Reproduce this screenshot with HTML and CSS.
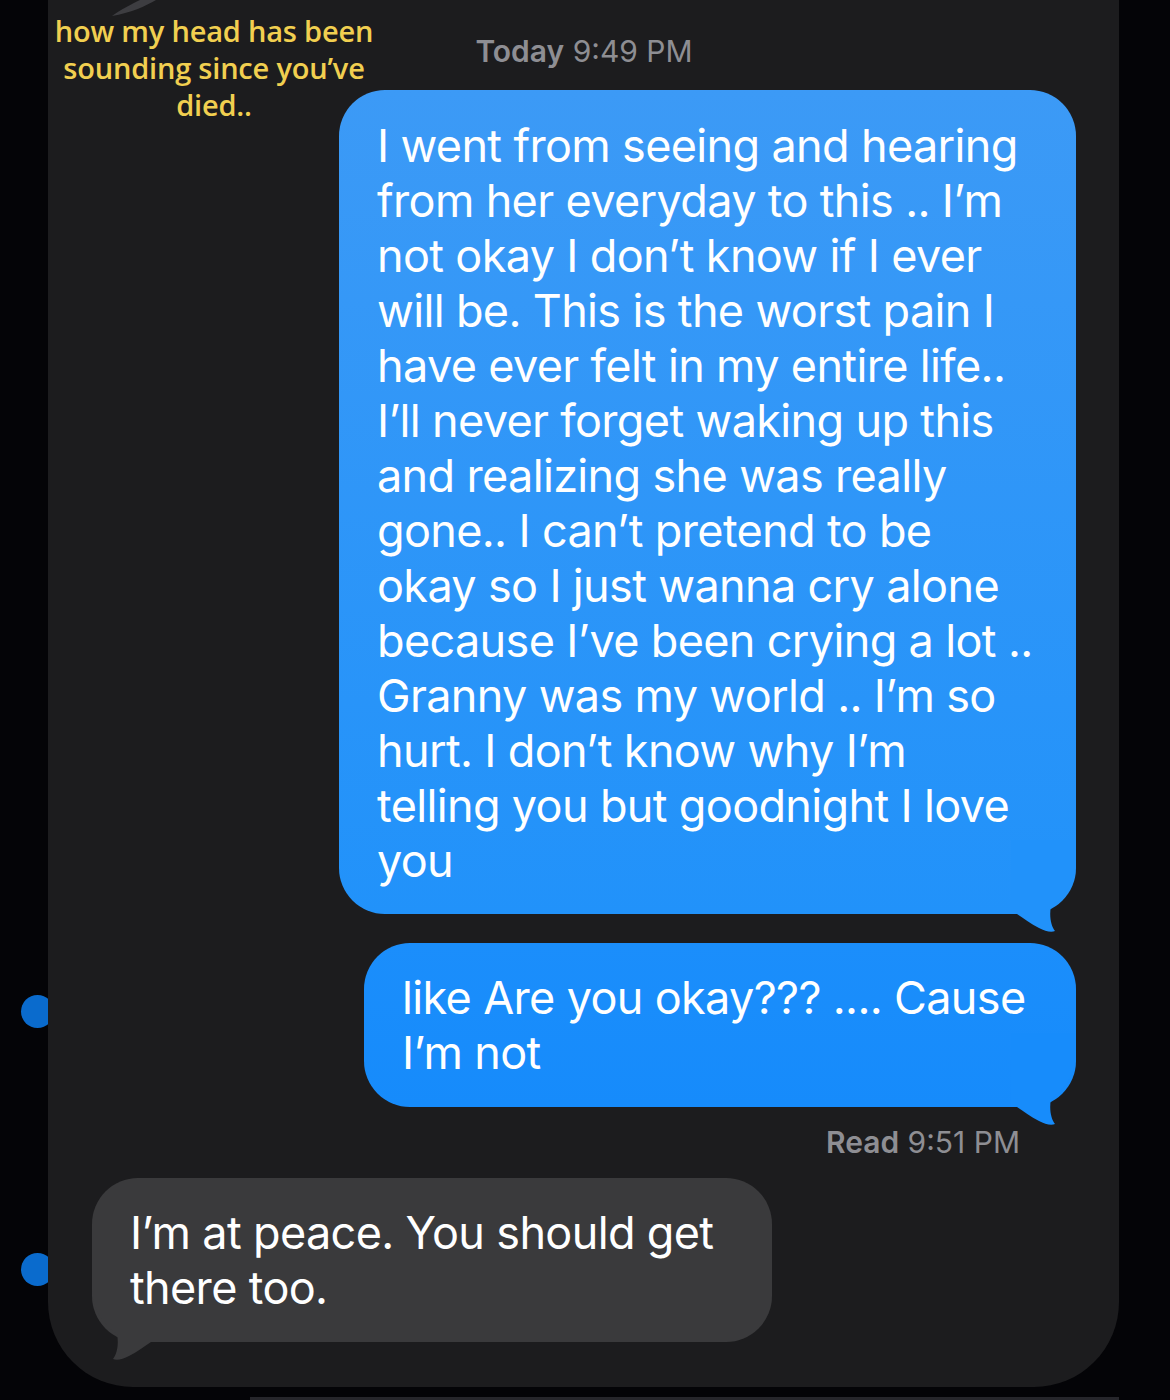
FILE: index.html
```html
<!DOCTYPE html>
<html lang="en">
<head>
    <meta charset="UTF-8">
    <meta name="viewport" content="width=device-width, initial-scale=1.0">
    <title>Messages</title>
    <link rel="stylesheet" href="styles.css">
</head>
<body>
    <div class="device">
        <span class="dot dot-top"></span>
        <span class="dot dot-bottom"></span>

        <div class="screen">
            <!-- bit of the previous bubble poking in at the top -->
            <svg class="prev-tail" width="50" height="20" viewBox="0 0 50 20">
                <path d="M2,16 C10,10 22,4 30,0 H46 C36,6 20,13 2,16 Z" fill="#3d3d41"/>
            </svg>

            <p class="caption">how my head has been<br>sounding since you’ve<br>died..</p>

            <div class="thread">
                <div class="stamp"><b>Today</b> 9:49 PM</div>

                <div class="bubble sent long">
                    I went from seeing and hearing<br>
                    from her everyday to this .. I’m<br>
                    not okay I don’t know if I ever<br>
                    will be. This is the worst pain I<br>
                    have ever felt in my entire life..<br>
                    I’ll never forget waking up this<br>
                    and realizing she was really<br>
                    gone.. I can’t pretend to be<br>
                    okay so I just wanna cry alone<br>
                    because I’ve been crying a lot ..<br>
                    Granny was my world .. I’m so<br>
                    hurt. I don’t know why I’m<br>
                    telling you but goodnight I love<br>
                    you
                    <svg class="tail tail-right" width="70" height="100" viewBox="0 0 70 100">
                        <path d="M0,0 H65 V20 C65,45 50,58 40,66 C38,76 40,86 44,91 C40,93 34,91 28,88 C20,84 12,78 6,74 H0 Z" fill="#2192fa"/>
                    </svg>
                </div>

                <div class="bubble sent short">
                    like Are you okay??? .... Cause<br>
                    I’m not
                    <svg class="tail tail-right" width="70" height="100" viewBox="0 0 70 100">
                        <path d="M0,0 H65 V20 C65,45 50,58 40,66 C38,76 40,86 44,91 C40,93 34,91 28,88 C20,84 12,78 6,74 H0 Z" fill="#178cfb"/>
                    </svg>
                </div>

                <div class="receipt"><b>Read</b> 9:51 PM</div>

                <div class="bubble received">
                    I’m at peace. You should get<br>
                    there too.
                    <svg class="tail tail-left" width="70" height="100" viewBox="0 0 70 100">
                        <path d="M0,0 H65 V20 C65,45 50,58 40,66 C38,76 40,86 44,91 C40,93 34,91 28,88 C20,84 12,78 6,74 H0 Z" fill="#3a3a3c"/>
                    </svg>
                </div>
            </div>
        </div>

        <div class="home-strip"></div>
    </div>
</body>
</html>
```

FILE: styles.css
```css
body {
    margin: 0;
    background-color: #040407;
    font-family: Inter, "Noto Sans", sans-serif;
}
.device {
    position: relative;
    height: 1400px;
    overflow: hidden;
}
.dot {
    position: absolute;
    left: 21px;
    width: 33px;
    height: 33px;
    border-radius: 50%;
    background-color: #0a6bcd;
}
.dot-top {
    top: 995px;
}
.dot-bottom {
    top: 1253px;
}
.screen {
    position: relative;
    margin-left: 48px;
    width: 1071px;
    height: 1387px;
    background-color: #1c1c1e;
    border-radius: 0 0 85px 85px;
}
.prev-tail {
    position: absolute;
    left: 62px;
    top: 0;
}
.caption {
    position: absolute;
    left: 0;
    top: 12px;
    width: 332px;
    margin: 0;
    text-align: center;
    font-family: "Open Sans", sans-serif;
    font-weight: 600;
    font-size: 29px;
    line-height: 37px;
    letter-spacing: -0.2px;
    color: #f1cf50;
}
.thread {
    display: flex;
    flex-direction: column;
    padding: 34px 43px 0 44px;
}
.stamp,
.receipt {
    font-size: 30px;
    line-height: 34px;
    color: #8e8e93;
}
.stamp b,
.receipt b {
    font-weight: 600;
}
.stamp {
    align-self: center;
}
.receipt {
    align-self: flex-end;
    margin: 18px 56px 0 0;
}
.bubble {
    position: relative;
    z-index: 0;
    box-sizing: border-box;
    font-size: 45px;
    line-height: 55px;
    letter-spacing: -0.65px;
    white-space: nowrap;
    color: #ffffff;
    border-radius: 46px;
}
.sent {
    align-self: flex-end;
}
.long {
    width: 737px;
    margin-top: 22px;
    padding: 28px 30px 26px 38px;
    background: linear-gradient(#3c9af6, #2192fa);
}
.short {
    width: 712px;
    margin-top: 29px;
    padding: 27px 30px 27px 38px;
    background: linear-gradient(#1b8efb, #168bfb);
}
.received {
    align-self: flex-start;
    width: 680px;
    margin-top: 19px;
    padding: 27px 30px 27px 38px;
    background-color: #3a3a3c;
}
.tail {
    position: absolute;
    z-index: -1;
    bottom: -26px;
}
.tail-right {
    right: -5px;
}
.tail-left {
    left: -5px;
    transform: scaleX(-1);
}
.home-strip {
    width: 869px;
    height: 3px;
    margin: 10px 0 0 250px;
    background-color: #26262b;
}
```
